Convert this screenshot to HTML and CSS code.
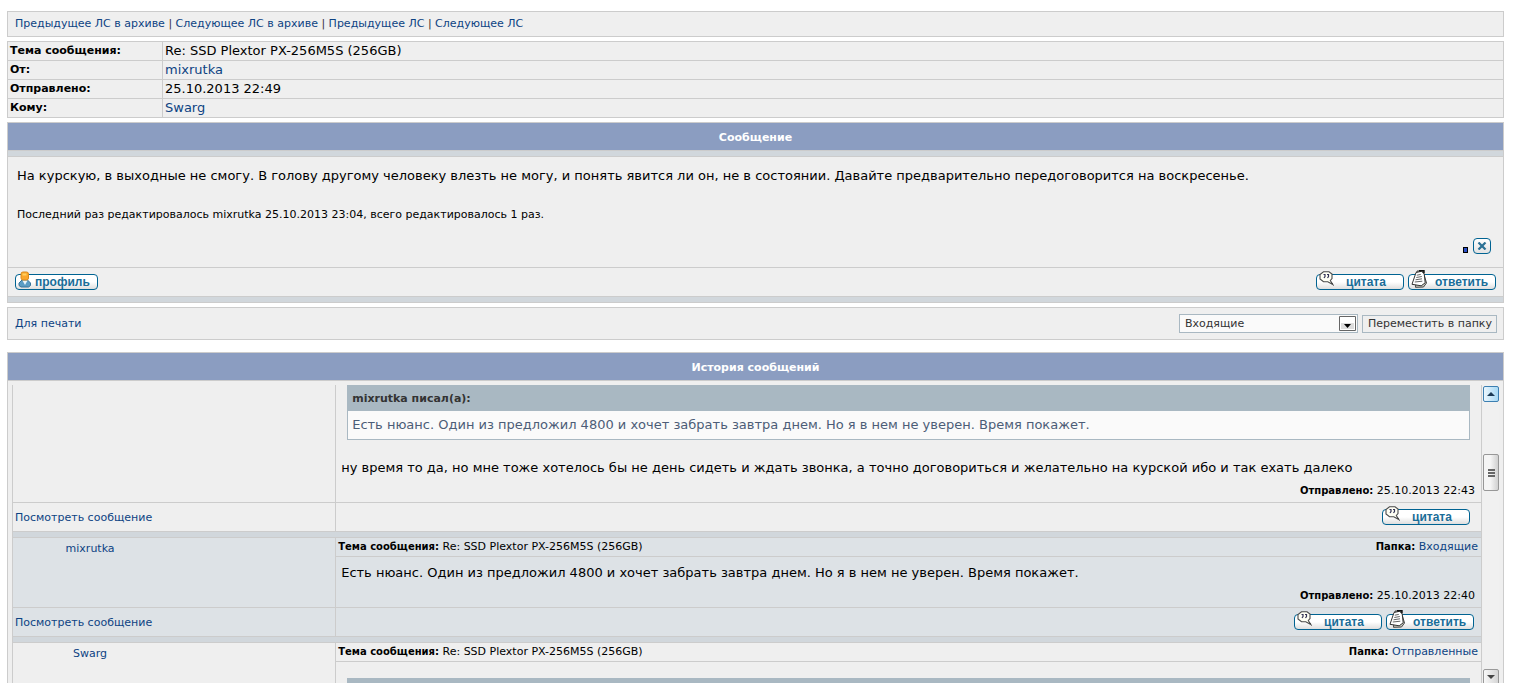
FILE: index.html
```html
<!DOCTYPE html>
<html lang="ru">
<head>
  <meta charset="UTF-8">
  <meta name="viewport" content="width=device-width, initial-scale=1">
  <title>Личные сообщения</title>
  <link rel="stylesheet" href="styles.css">
</head>
<body>
  <svg class="sprites" width="0" height="0" aria-hidden="true">
    <symbol id="quote" viewBox="0 0 16 15">
      <path d="M4.500 .7h5.500l3 2.300v4.500l-1.700 2 2.500 4-5-2.700H4.500L1 8V3.500z" fill="#fffff4" stroke="#4a4a4a" stroke-width="1.100"/>
      <path d="M4.500 3.500H6v2L5 7M8 3.500h1.500v2l-1 1.500" fill="none" stroke="#335" stroke-width="1.200"/>
    </symbol>
    <symbol id="reply" viewBox="0 0 17 18">
      <path d="M6 1h6l3.500 12-3 4-8 .3z" fill="#cfcfc4" stroke="#444"/>
      <path d="M5 2.500l5.500-1.200 2.700 2.500 1 9-4 3-9.200-1.500z" fill="#fff" stroke="#333"/>
      <path d="M5.800 5.200l4-.8M5.300 7.500l5.500-1M4.500 9.800l6.500-1M3.800 12l7.500-.8" stroke="#666" fill="none"/>
      <path d="M8 .7h5v2.500" stroke="#111" stroke-width="1.400" fill="none"/>
    </symbol>
    <symbol id="user" viewBox="0 0 14 17">
      <path d="M1 14.500V12l3-3h5.500l3 3v2.500l-2 1.500H3z" fill="#5b9cc4" stroke="#38749a"/>
      <path d="M4.500 9.500L7 14l2.500-4.500z" fill="#eaf4fa"/>
      <rect x="3" y="1" width="7.500" height="8" rx="2" fill="#fba62a" stroke="#d98b1c"/>
      <path d="M4.500 2.500h4v2h-4z" fill="#ffd061"/>
    </symbol>
  </svg>

  <div class="box nav">
    <a href="#">Предыдущее ЛС в архиве</a> | <a href="#">Следующее ЛС в архиве</a> | <a href="#">Предыдущее ЛС</a> | <a href="#">Следующее ЛС</a>
  </div>

  <table class="info">
    <tr><th>Тема сообщения:</th><td>Re: SSD Plextor PX-256M5S (256GB)</td></tr>
    <tr><th>От:</th><td><a href="#">mixrutka</a></td></tr>
    <tr><th>Отправлено:</th><td>25.10.2013 22:49</td></tr>
    <tr><th>Кому:</th><td><a href="#">Swarg</a></td></tr>
  </table>

  <div class="panel">
    <h2>Сообщение</h2>
    <div class="spacer"></div>
    <div class="message">
      <p class="text">На курскую, в выходные не смогу. В голову другому человеку влезть не могу, и понять явится ли он, не в состоянии. Давайте предварительно передоговорится на воскресенье.</p>
      <p class="edited">Последний раз редактировалось mixrutka 25.10.2013 23:04, всего редактировалось 1 раз.</p>
      <div class="tools">
        <span class="dot"></span>
        <button class="delete" type="button" aria-label="Удалить">
          <svg width="10" height="8" viewBox="0 0 10 8"><path d="M1.500 .5l7 7M8.500 .5l-7 7" stroke="#2c7195" stroke-width="2.200"/></svg>
        </button>
      </div>
    </div>
    <div class="actions">
      <a class="btn profile" href="#"><svg class="icon" width="14" height="17"><use href="#user"/></svg>профиль</a>
      <div class="right">
        <a class="btn" href="#"><svg class="icon bubble" width="16" height="15"><use href="#quote"/></svg>цитата</a>
        <a class="btn" href="#"><svg class="icon" width="17" height="18"><use href="#reply"/></svg>ответить</a>
      </div>
    </div>
    <div class="spacer"></div>
  </div>

  <form class="box folder">
    <a href="#">Для печати</a>
    <div class="move">
      <label class="select">
        <select aria-label="Папка"><option>Входящие</option></select>
        <svg class="arrow" width="17" height="15" viewBox="0 0 17 15">
          <path d="M.5 .5h16v14H.5z" fill="#fff" stroke="#666"/>
          <path d="M2 7h13v6H2z" fill="#ddd"/>
          <path d="M5 8h7l-3.500 4z" fill="#000"/>
        </svg>
      </label>
      <button class="submit" type="button">Переместить в папку</button>
    </div>
  </form>

  <div class="panel history">
    <h2>История сообщений</h2>
    <div class="scroller">
      <table class="posts">
        <tr>
          <td class="author cut"></td>
          <td class="body cut">
            <div class="quote">
              <b>mixrutka писал(а):</b>
              <p>Есть нюанс. Один из предложил 4800 и хочет забрать завтра днем. Но я в нем не уверен. Время покажет.</p>
            </div>
            <p class="text">ну время то да, но мне тоже хотелось бы не день сидеть и ждать звонка, а точно договориться и желательно на курской ибо и так ехать далеко</p>
            <p class="sent"><b>Отправлено:</b> 25.10.2013 22:43</p>
          </td>
        </tr>
        <tr>
          <td class="view"><a href="#">Посмотреть сообщение</a></td>
          <td class="links single"><div class="right"><a class="btn" href="#"><svg class="icon bubble" width="16" height="15"><use href="#quote"/></svg>цитата</a></div></td>
        </tr>
        <tr><td class="gap" colspan="2"></td></tr>

        <tr class="alt">
          <td class="author" rowspan="2"><a href="#">mixrutka</a></td>
          <td class="subject"><div><span><b>Тема сообщения:</b> Re: SSD Plextor PX-256M5S (256GB)</span><span><b>Папка:</b> <a href="#">Входящие</a></span></div></td>
        </tr>
        <tr class="alt">
          <td class="body">
            <p class="text">Есть нюанс. Один из предложил 4800 и хочет забрать завтра днем. Но я в нем не уверен. Время покажет.</p>
            <p class="sent"><b>Отправлено:</b> 25.10.2013 22:40</p>
          </td>
        </tr>
        <tr class="alt">
          <td class="view"><a href="#">Посмотреть сообщение</a></td>
          <td class="links">
            <div class="right">
              <a class="btn" href="#"><svg class="icon bubble" width="16" height="15"><use href="#quote"/></svg>цитата</a>
              <a class="btn" href="#"><svg class="icon" width="17" height="18"><use href="#reply"/></svg>ответить</a>
            </div>
          </td>
        </tr>
        <tr><td class="gap" colspan="2"></td></tr>

        <tr>
          <td class="author" rowspan="2"><a href="#">Swarg</a></td>
          <td class="subject"><div><span><b>Тема сообщения:</b> Re: SSD Plextor PX-256M5S (256GB)</span><span><b>Папка:</b> <a href="#">Отправленные</a></span></div></td>
        </tr>
        <tr>
          <td class="body last"><div class="quote"><b></b></div></td>
        </tr>
      </table>
      <div class="scrollbar">
        <button class="up" type="button" aria-label="Вверх"><svg width="8" height="4" viewBox="0 0 8 4"><path d="M0 4l4-4 4 4z" fill="#1b3a55"/></svg></button>
        <div class="thumb"><i></i><i></i><i></i></div>
        <button class="down" type="button" aria-label="Вниз"><svg width="8" height="4" viewBox="0 0 8 4"><path d="M0 0h8L4 4z" fill="#444"/></svg></button>
      </div>
    </div>
  </div>
</body>
</html>
```
FILE: styles.css
```css
body {
  margin: 0;
  padding: 11px 11px 0 7px;
  background: #fff;
  color: #000;
  font-family: Verdana, "DejaVu Sans", sans-serif;
  font-size: 11px;
  overflow: hidden;
}
a {
  color: #0d4383;
  text-decoration: none;
}
p {
  margin: 0;
}
.sprites {
  position: absolute;
}
.box {
  background: #efefef;
  border: 1px solid #ccc;
}
.nav {
  padding: 0 7px;
  line-height: 24px;
  color: #333;
}

.info {
  width: 100%;
  margin: 4px 0;
  border-collapse: collapse;
  background: #efefef;
}
.info th,
.info td {
  height: 18px;
  padding: 0 2px;
  border: 1px solid #ccc;
  text-align: left;
  line-height: 18px;
}
.info th {
  width: 150px;
  font-size: 11px;
}
.info td {
  font-size: 13px;
}

.panel {
  background: #efefef;
  border: 1px solid #ccc;
}
.panel h2 {
  margin: 0;
  padding-top: 2px;
  background: #8b9dc1;
  border-bottom: 1px solid #ccc;
  color: #fff;
  font-size: 11px;
  line-height: 25px;
  text-align: center;
}
.spacer {
  height: 5px;
  background: #d1d7dc;
}
.text {
  font-size: 13px;
  line-height: 18px;
}
.message {
  padding: 10px 9px 0;
  border-top: 1px solid #ccc;
}
.edited {
  margin-top: 23px;
  line-height: 14px;
}
.tools {
  display: flex;
  justify-content: flex-end;
  align-items: center;
  gap: 5px;
  padding: 16px 3px 13px 0;
}
.dot {
  width: 3px;
  height: 4px;
  margin-top: 8px;
  border: 1px solid #000;
  background: #2b50c8;
}
.delete {
  display: flex;
  align-items: center;
  justify-content: center;
  width: 18px;
  height: 16px;
  padding: 0;
  border: 1px solid #006392;
  border-radius: 4px;
  background: linear-gradient(#fff, #e2e2e2);
}
.actions {
  display: flex;
  justify-content: space-between;
  align-items: center;
  height: 28px;
  padding: 0 7px;
  border: solid #ccc;
  border-width: 1px 0;
}
.right {
  display: flex;
  justify-content: flex-end;
  gap: 4px;
}
.btn {
  position: relative;
  box-sizing: border-box;
  width: 88px;
  height: 16px;
  padding-left: 29px;
  border: 1px solid #006392;
  border-radius: 4px;
  background: linear-gradient(#fff 50%, #dedede);
  color: #1a6d98;
  font: bold 12px/14px "Liberation Sans", Arial, sans-serif;
}
.right .btn + .btn {
  padding-left: 26px;
}
.btn.profile {
  width: 83px;
  padding-left: 19px;
}
.icon {
  position: absolute;
  left: 2px;
  bottom: 1px;
}
.bubble {
  bottom: 3px;
}

.folder {
  display: flex;
  justify-content: space-between;
  align-items: center;
  height: 31px;
  margin: 4px 0 12px;
  padding: 0 6px 0 7px;
}
.move {
  display: flex;
  align-items: center;
  gap: 4px;
}
.select {
  position: relative;
  display: flex;
}
.select select {
  appearance: none;
  width: 179px;
  height: 19px;
  padding: 0 5px;
  border: 1px solid #a9b8c2;
  border-radius: 0;
  background: #fafafa;
  color: #333;
  font: 11px Verdana, "DejaVu Sans", sans-serif;
}
.arrow {
  position: absolute;
  top: 2px;
  right: 2px;
  pointer-events: none;
}
.submit {
  height: 18px;
  padding: 0 4px 0 5px;
  border: 1px solid #a9b8c2;
  background: #efefef;
  color: #333;
  font: 11px Verdana, "DejaVu Sans", sans-serif;
}

.scroller {
  display: flex;
  gap: 1px;
  height: 300px;
  padding: 4px;
  overflow: hidden;
}
.posts {
  flex: 1;
  align-self: flex-start;
  border-collapse: collapse;
}
.posts b {
  font-size: 10px;
}
.posts td {
  padding: 0;
  border: 1px solid #ccc;
  vertical-align: top;
}
.posts .cut {
  border-top: 0;
}
.posts .author {
  width: 22%;
  padding: 3px 168px 0 0;
  box-sizing: border-box;
  text-align: center;
  line-height: 15px;
}
.alt {
  background: #dde2e6;
}
.posts .gap {
  height: 5px;
  background: #d1d7dc;
}
.posts .view {
  height: 28px;
  padding-left: 2px;
  vertical-align: middle;
}
.posts .links {
  padding-right: 7px;
  vertical-align: middle;
}
.posts .single {
  padding-right: 11px;
}
.subject div {
  display: flex;
  justify-content: space-between;
  padding: 0 3px 0 2px;
  line-height: 18px;
}
.posts .body {
  padding: 7px 6px 3px 5px;
}
.posts .body.cut {
  padding-top: 0;
}
.quote {
  margin: 0 5px 19px 6px;
  border: 1px solid #a9b8c2;
  background: #fafafa;
  color: #4c5d77;
  font-size: 13px;
}
.quote b {
  display: block;
  height: 25px;
  padding-left: 4px;
  background: #a9b8c2;
  color: #333;
  line-height: 25px;
}
.posts .quote b {
  font-size: 11px;
}
.quote p {
  padding-left: 4px;
  line-height: 28px;
}
.posts .last {
  padding-top: 16px;
}
.sent {
  padding: 6px 0 1px;
  text-align: right;
  line-height: 15px;
}

.scrollbar {
  display: flex;
  flex-direction: column;
  width: 16px;
  background: #f0f0f0;
}
.scrollbar button {
  display: flex;
  align-items: center;
  justify-content: center;
  height: 16px;
  padding: 0;
  border: 1px solid #999;
  border-radius: 2px;
  background: linear-gradient(90deg, #f8f8f8, #d5d5d5);
}
.scrollbar .up {
  margin-top: 1px;
  border-color: #3c7fb1;
  background: linear-gradient(90deg, #eaf6fd, #a7d9f5);
}
.scrollbar .down {
  margin-top: auto;
}
.thumb {
  display: flex;
  flex-direction: column;
  align-items: center;
  justify-content: center;
  gap: 1px;
  height: 35px;
  margin-top: 52px;
  border: 1px solid #979797;
  border-radius: 2px;
  background: linear-gradient(90deg, #f5f5f5 45%, #d0d0d0);
}
.thumb i {
  width: 7px;
  height: 2px;
  background: #666;
}
```
